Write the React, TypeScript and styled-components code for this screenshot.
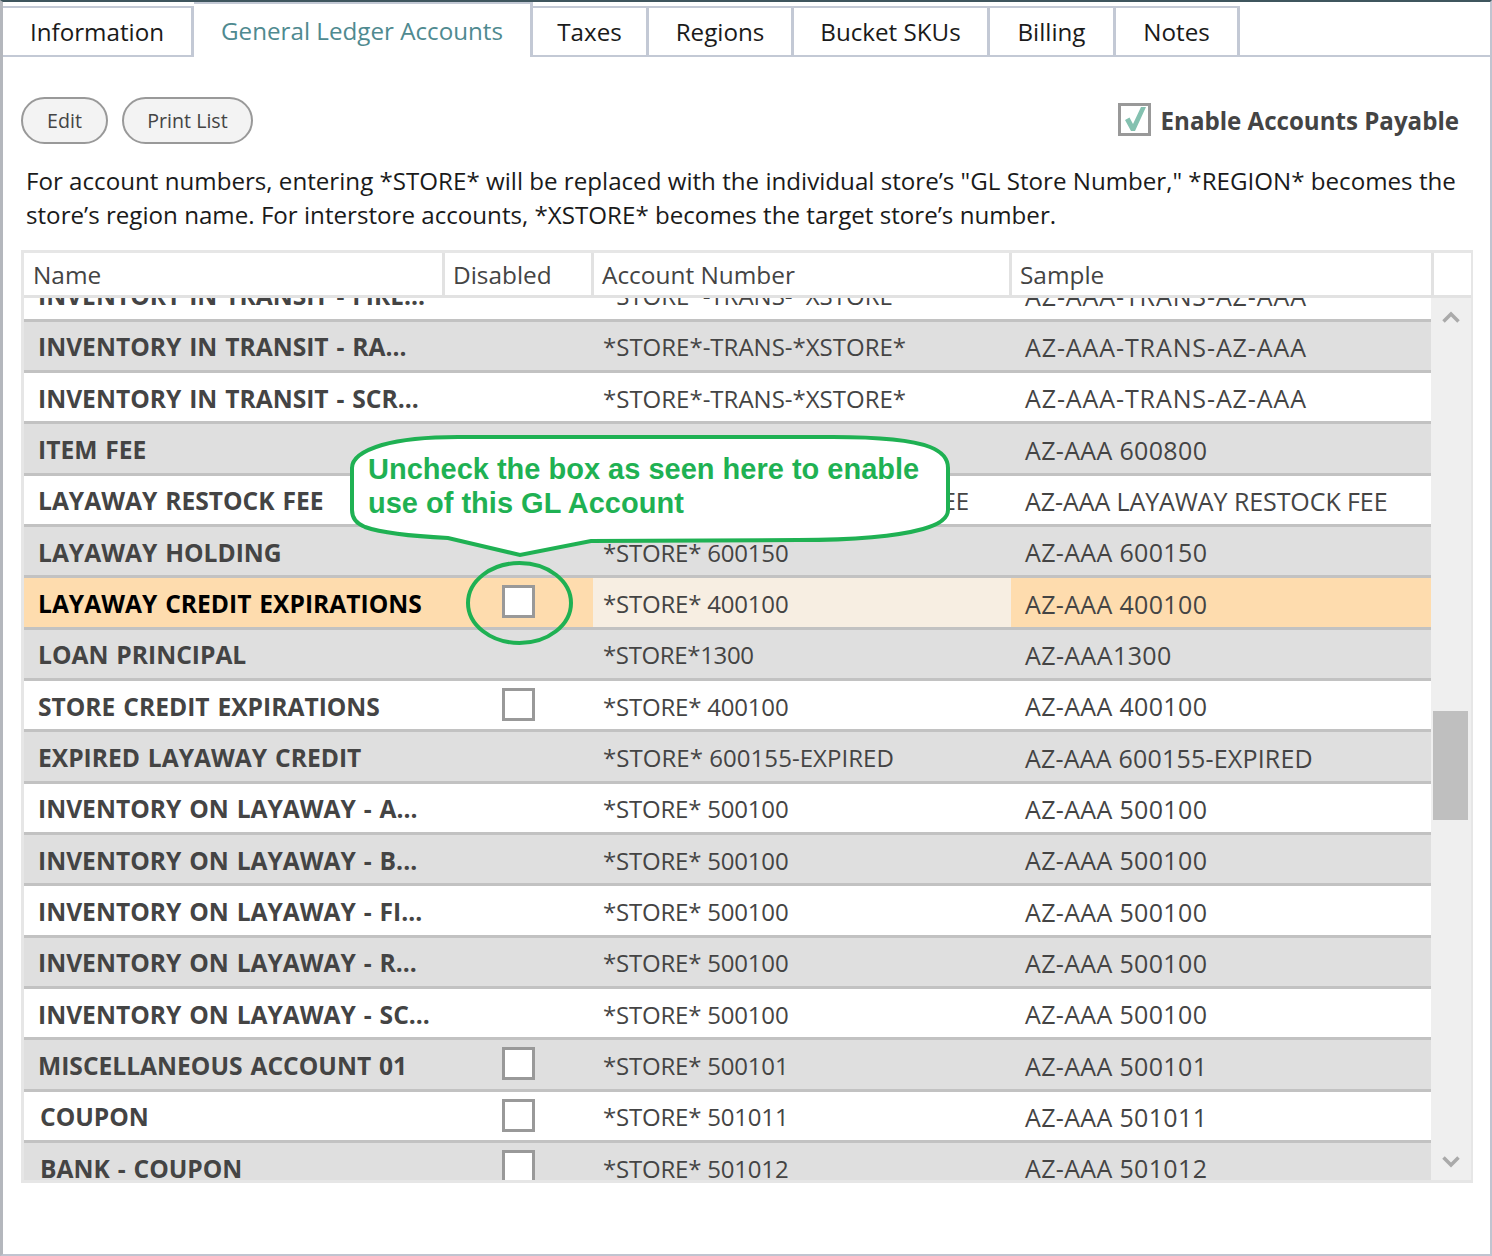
import styled, { createGlobalStyle } from 'styled-components'

const FONT = `"Open Sans", "Noto Sans", sans-serif`
const GREEN = '#1fb153'

const GlobalStyle = createGlobalStyle`
  html, body {
    margin: 0;
    padding: 0;
    background: #fff;
  }
  * {
    box-sizing: border-box;
  }
`

const St = {
  Page: styled.div`
    position: relative;
    width: 1492px;
    height: 1256px;
    overflow: hidden;
    background: #fff;
    font-family: ${FONT};
    color: #444;
    border-top: 2px solid #3f565e;
    border-left: 3px solid #b4b7bd;
    border-right: 2px solid #c0c4d0;
    border-bottom: 2px solid #c0c4d0;

    &::before {
      content: '';
      position: absolute;
      left: -3px;
      top: 0;
      width: 2px;
      height: 118px;
      background: #3f565e;
    }
  `,
  TabStrip: styled.div`
    display: flex;
    align-items: flex-end;
    height: 55px;
    border-bottom: 2px solid #c3c9d5;
  `,
  Tab: styled.div<{ $width: number; $active?: boolean }>`
    display: flex;
    align-items: center;
    justify-content: center;
    width: ${({ $width }) => $width}px;
    height: ${({ $active }) => ($active ? 55 : 49)}px;
    margin-bottom: ${({ $active }) => ($active ? -2 : 0)}px;
    font-size: 24.2px;
    color: ${({ $active }) => ($active ? '#4f8a90' : '#1a1a1a')};
    background: #fff;
    border: solid #c3c9d5;
    border-width: 2px 3px 0 0;
  `,
  Content: styled.div`
    padding: 40px 18px 0 18px;
  `,
  Toolbar: styled.div`
    display: flex;
    align-items: center;
    justify-content: space-between;
    height: 47px;
    padding-right: 13px;
  `,
  ButtonGroup: styled.div`
    display: flex;
    gap: 14px;
  `,
  PillButton: styled.div<{ $width: number }>`
    display: flex;
    align-items: center;
    justify-content: center;
    width: ${({ $width }) => $width}px;
    height: 47px;
    border: 2px solid #999;
    border-radius: 24px;
    background: #f3f3f3;
    font-size: 19.6px;
    color: #444;
  `,
  EnableRow: styled.div`
    display: flex;
    align-items: center;
    gap: 10px;
  `,
  EnableBox: styled.div`
    display: flex;
    align-items: center;
    justify-content: center;
    width: 33px;
    height: 33px;
    margin-bottom: 3px;
    border: 3px solid #999;
    background: #fff;
  `,
  EnableLabel: styled.span`
    font-size: 24.1px;
    font-weight: 700;
    color: #444;
    white-space: nowrap;
  `,
  Intro: styled.p`
    margin: 20px 0 18px 5px;
    font-size: 24.15px;
    line-height: 34px;
    color: #1a1a1a;
    white-space: nowrap;
  `,
  TableFrame: styled.div`
    width: 1452px;
    height: 933px;
    border: 3px solid #e6e6e6;
    border-right-width: 2px;
    display: flex;
    flex-direction: column;
  `,
  HeaderRow: styled.div`
    display: grid;
    grid-template-columns: 421px 149px 418px 422px 37px;
    flex: none;
    height: 45px;
    border-bottom: 3px solid #e2e2e2;
    position: relative;
    background: #fff;
    z-index: 1;
  `,
  HeaderCell: styled.div`
    display: flex;
    align-items: center;
    padding: 1px 0 0 8px;
    font-size: 24.4px;
    color: #444;
    border-right: 3px solid #e2e2e2;

    &:first-child {
      padding-left: 9px;
    }

    &:last-child {
      border-right: none;
    }
  `,
  BodyWrap: styled.div`
    display: flex;
    flex: 1;
    min-height: 0;
  `,
  Body: styled.div`
    width: 1407px;
    overflow: hidden;
  `,
  ScrolledRows: styled.div`
    margin-top: -27.5px;
  `,
  Row: styled.div<{ $shade?: boolean }>`
    display: grid;
    grid-template-columns: 420px 149px 418px 420px;
    height: 51.33px;
    border-bottom: 3px solid #c2c2c2;
    background: ${({ $shade }) => ($shade ? '#dfdfdf' : '#fff')};
  `,
  NameCell: styled.div<{ $selected?: boolean; $indent?: number }>`
    display: flex;
    align-items: center;
    padding-left: ${({ $indent }) => $indent ?? 14}px;
    padding-top: 2px;
    font-size: 24.6px;
    font-weight: 700;
    word-spacing: 1.5px;
    white-space: pre;
    overflow: hidden;
    color: ${({ $selected }) => ($selected ? '#000' : '#444')};
    background: ${({ $selected }) => ($selected ? '#fedcae' : 'transparent')};
  `,
  CheckCell: styled.div<{ $selected?: boolean }>`
    display: flex;
    justify-content: center;
    padding-top: 7px;
    background: ${({ $selected }) => ($selected ? '#fedcae' : 'transparent')};
  `,
  RowCheck: styled.div`
    width: 33px;
    height: 33px;
    border: 3px solid #999;
    background: #fff;
  `,
  TextCell: styled.div<{ $tint?: string; $indent: number; $size: number; $track: number }>`
    display: flex;
    align-items: center;
    padding-left: ${({ $indent }) => $indent}px;
    padding-top: 2px;
    font-size: ${({ $size }) => $size}px;
    letter-spacing: ${({ $track }) => $track}px;
    white-space: nowrap;
    overflow: hidden;
    color: #444;
    background: ${({ $tint }) => $tint ?? 'transparent'};
  `,
  ScrollTrack: styled.div`
    width: 40px;
    display: flex;
    flex-direction: column;
    align-items: center;
    background: #efefef;
  `,
  ScrollThumb: styled.div`
    width: 35px;
    height: 109px;
    margin: 388px 1px auto 0;
    background: #bfbfbf;
  `,
  Arrow: styled.svg<{ $top?: number; $bottom?: number }>`
    flex: none;
    margin-top: ${({ $top }) => $top ?? 0}px;
    margin-bottom: ${({ $bottom }) => $bottom ?? 0}px;
  `,
  Callout: styled.div`
    position: absolute;
    left: 345px;
    top: 432px;
    width: 604px;
    height: 124px;
  `,
  CalloutText: styled.div`
    position: absolute;
    left: 20px;
    top: 18px;
    font-family: "Liberation Sans", Arial, sans-serif;
    font-size: 29px;
    font-weight: 700;
    line-height: 34px;
    color: ${GREEN};
    white-space: nowrap;
  `,
  Ring: styled.svg`
    position: absolute;
    left: 462px;
    top: 558px;
  `,
}

type RowData = {
  name: string
  account: string
  sample: string
  check?: boolean
  selected?: boolean
  indent?: number
  accountTrack?: number
  sampleTrack?: number
}

const TRANSIT = {
  account: '*STORE*-TRANS-*XSTORE*',
  sample: 'AZ-AAA-TRANS-AZ-AAA',
  accountTrack: 0,
  sampleTrack: 0.9,
}

const ROWS: RowData[] = [
  { name: 'INVENTORY IN TRANSIT - FIRE...', ...TRANSIT },
  { name: 'INVENTORY IN TRANSIT - RA...', ...TRANSIT },
  { name: 'INVENTORY IN TRANSIT - SCR...', ...TRANSIT },
  { name: 'ITEM FEE', account: '*STORE* 600800', sample: 'AZ-AAA 600800' },
  {
    name: 'LAYAWAY RESTOCK FEE',
    account: '*STORE* LAYAWAY RESTOCK FEE',
    sample: 'AZ-AAA LAYAWAY RESTOCK FEE',
    accountTrack: -0.05,
    sampleTrack: -0.08,
  },
  { name: 'LAYAWAY HOLDING', account: '*STORE* 600150', sample: 'AZ-AAA 600150' },
  { name: 'LAYAWAY CREDIT EXPIRATIONS', account: '*STORE* 400100', sample: 'AZ-AAA 400100', check: true, selected: true },
  { name: 'LOAN PRINCIPAL', account: '*STORE*1300', sample: 'AZ-AAA1300', accountTrack: -0.35, sampleTrack: 0.4 },
  { name: 'STORE CREDIT EXPIRATIONS', account: '*STORE* 400100', sample: 'AZ-AAA 400100', check: true },
  {
    name: 'EXPIRED LAYAWAY CREDIT',
    account: '*STORE* 600155-EXPIRED',
    sample: 'AZ-AAA 600155-EXPIRED',
    accountTrack: 0.05,
    sampleTrack: 0.2,
  },
  { name: 'INVENTORY ON LAYAWAY - A...', account: '*STORE* 500100', sample: 'AZ-AAA 500100' },
  { name: 'INVENTORY ON LAYAWAY - B...', account: '*STORE* 500100', sample: 'AZ-AAA 500100' },
  { name: 'INVENTORY ON LAYAWAY - FI...', account: '*STORE* 500100', sample: 'AZ-AAA 500100' },
  { name: 'INVENTORY ON LAYAWAY - R...', account: '*STORE* 500100', sample: 'AZ-AAA 500100' },
  { name: 'INVENTORY ON LAYAWAY - SC...', account: '*STORE* 500100', sample: 'AZ-AAA 500100' },
  { name: 'MISCELLANEOUS ACCOUNT 01', account: '*STORE* 500101', sample: 'AZ-AAA 500101', check: true },
  { name: 'COUPON', account: '*STORE* 501011', sample: 'AZ-AAA 501011', check: true, indent: 16 },
  { name: 'BANK - COUPON', account: '*STORE* 501012', sample: 'AZ-AAA 501012', check: true, indent: 16 },
]

const TABS = [
  { label: 'Information', width: 191 },
  { label: 'General Ledger Accounts', width: 339, active: true },
  { label: 'Taxes', width: 116 },
  { label: 'Regions', width: 145 },
  { label: 'Bucket SKUs', width: 196 },
  { label: 'Billing', width: 126 },
  { label: 'Notes', width: 124 },
]

const App = () => {
  return (
    <St.Page>
      <GlobalStyle />
      <St.TabStrip>
        {TABS.map((tab) => (
          <St.Tab key={tab.label} $width={tab.width} $active={tab.active}>
            {tab.label}
          </St.Tab>
        ))}
      </St.TabStrip>

      <St.Content>
        <St.Toolbar>
          <St.ButtonGroup>
            <St.PillButton $width={87}>Edit</St.PillButton>
            <St.PillButton $width={131}>Print List</St.PillButton>
          </St.ButtonGroup>
          <St.EnableRow>
            <St.EnableBox>
              <svg width="27" height="27" viewBox="0 0 27 27">
                <path d="M4 14 L8.5 11.5 L12 18 L20 1 L25 1 L14 25 L10 25 Z" fill="#84c1b0" />
              </svg>
            </St.EnableBox>
            <St.EnableLabel>Enable Accounts Payable</St.EnableLabel>
          </St.EnableRow>
        </St.Toolbar>

        <St.Intro>
          For account numbers, entering *STORE* will be replaced with the individual store’s "GL Store Number," *REGION* becomes the
          <br />
          store’s region name. For interstore accounts, *XSTORE* becomes the target store’s number.
        </St.Intro>

        <St.TableFrame>
          <St.HeaderRow>
            <St.HeaderCell>Name</St.HeaderCell>
            <St.HeaderCell>Disabled</St.HeaderCell>
            <St.HeaderCell>Account Number</St.HeaderCell>
            <St.HeaderCell>Sample</St.HeaderCell>
            <St.HeaderCell />
          </St.HeaderRow>
          <St.BodyWrap>
            <St.Body>
              <St.ScrolledRows>
                {ROWS.map((row, i) => (
                  <St.Row key={row.name} $shade={i % 2 === 1}>
                    <St.NameCell $selected={row.selected} $indent={row.indent}>
                      {row.name}
                    </St.NameCell>
                    <St.CheckCell $selected={row.selected}>{row.check && <St.RowCheck />}</St.CheckCell>
                    <St.TextCell
                      $indent={10}
                      $size={24}
                      $track={row.accountTrack ?? -0.2}
                      $tint={row.selected ? '#f7eee2' : undefined}
                    >
                      {row.account}
                    </St.TextCell>
                    <St.TextCell
                      $indent={14}
                      $size={25}
                      $track={row.sampleTrack ?? 0.34}
                      $tint={row.selected ? '#fedcae' : undefined}
                    >
                      {row.sample}
                    </St.TextCell>
                  </St.Row>
                ))}
              </St.ScrolledRows>
            </St.Body>
            <St.ScrollTrack>
              <St.Arrow width="18" height="12" viewBox="0 0 18 12" $top={13}>
                <path d="M1.5 10.5 L9 3 L16.5 10.5" fill="none" stroke="#aaa" strokeWidth="3.5" />
              </St.Arrow>
              <St.ScrollThumb />
              <St.Arrow width="18" height="12" viewBox="0 0 18 12" $bottom={12}>
                <path d="M1.5 1.5 L9 9 L16.5 1.5" fill="none" stroke="#aaa" strokeWidth="3.5" />
              </St.Arrow>
            </St.ScrollTrack>
          </St.BodyWrap>
        </St.TableFrame>
      </St.Content>

      <St.Callout>
        <svg width="604" height="124" viewBox="0 0 604 124">
          <path
            d="M4 34 Q4 20 34 11 Q62 3 110 3 L485 3 Q556 3 582 13 Q600 20 600 34 L600 76 Q600 88 575 95 Q535 106 450 106 L243 107 L172 121 L100 104 Q40 101 17 93 Q4 88 4 76 Z"
            fill="#fff"
            stroke={GREEN}
            strokeWidth="4"
          />
        </svg>
        <St.CalloutText>
          Uncheck the box as seen here to enable
          <br />
          use of this GL Account
        </St.CalloutText>
      </St.Callout>

      <St.Ring width="112" height="92" viewBox="0 0 112 92">
        <ellipse cx="54.5" cy="43" rx="51.5" ry="40" fill="none" stroke={GREEN} strokeWidth="4" />
      </St.Ring>
    </St.Page>
  )
}

export default App
